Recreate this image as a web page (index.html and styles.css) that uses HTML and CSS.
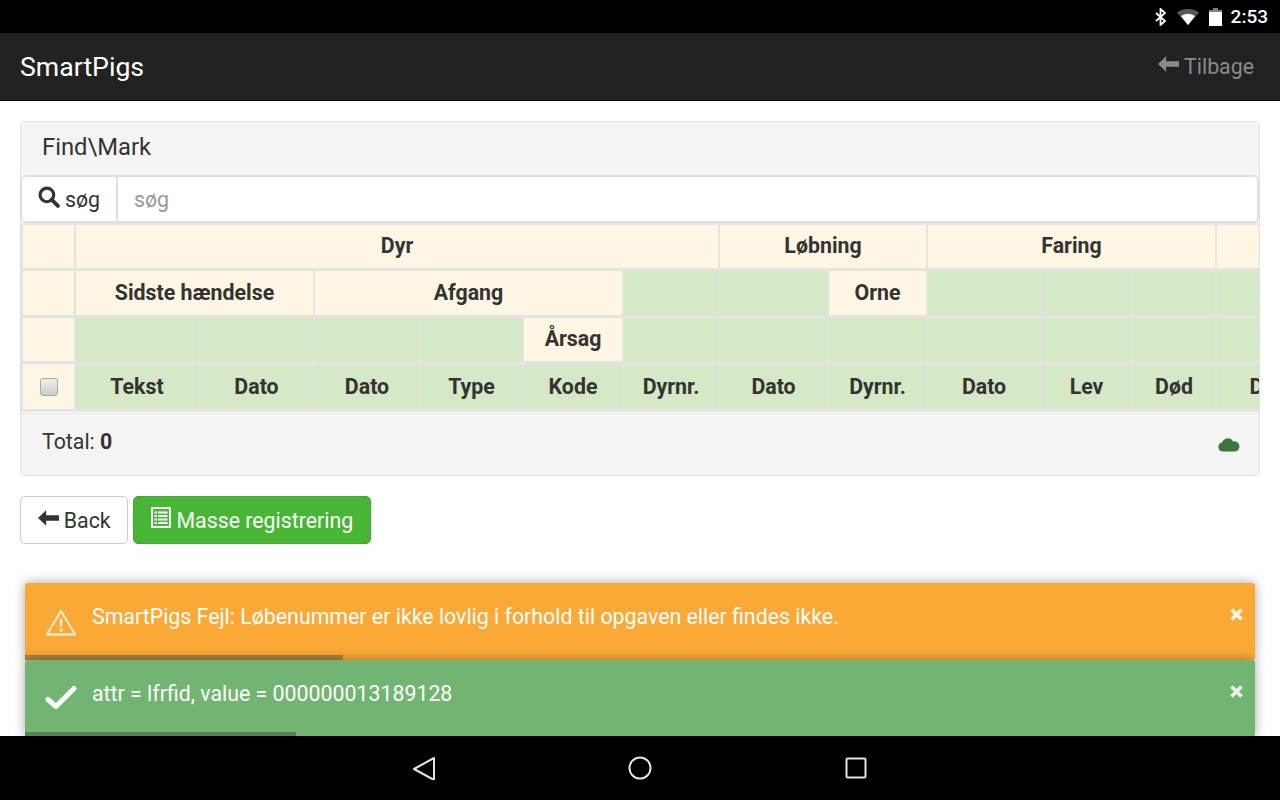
FILE: index.html
```html
<!DOCTYPE html>
<html lang="da">

<head>
  <meta charset="UTF-8" />
  <meta name="viewport" content="width=device-width, initial-scale=1.0" />
  <title>SmartPigs</title>
  <link rel="stylesheet" href="styles.css">
</head>

<body>
  <div class="status-bar">
    <svg class="ic-bt" viewBox="0 0 12 18"><path d="M1 5l9 8-4.500 4V1L10 5l-9 8" fill="none" stroke="#fff" stroke-width="1.800"/></svg>
    <svg class="ic-wifi" viewBox="0 0 22 16"><path d="M0 3.500C6-1.200 16-1.200 22 3.500L11 16z" fill="#fff" opacity=".35"/><path d="M4 7.200C8 3.800 14 3.800 18 7.200L11 16z" fill="#fff"/></svg>
    <svg class="ic-batt" viewBox="0 0 13 18"><path d="M4 0h5v2h4v3H0V2h4z" fill="#fff" opacity=".5"/><path d="M0 4h13v14H0z" fill="#fff"/></svg>
    <span class="clock">2:53</span>
  </div>

  <nav class="navbar">
    <span class="brand">SmartPigs</span>
    <a class="nav-back">
      <svg class="ic-arrow" viewBox="0 0 22 16"><path d="M0 8l8.500-8v5H22v6H8.500v5z" fill="currentColor"/></svg>
      Tilbage
    </a>
  </nav>

  <main class="content">
    <div class="panel">
      <div class="panel-heading">Find\Mark</div>

      <div class="search-row">
        <span class="search-addon">
          <svg class="ic-search" viewBox="0 0 21 21"><circle cx="8.500" cy="8.500" r="6.500" fill="none" stroke="currentColor" stroke-width="3"/><path d="M13 13l6 6" stroke="currentColor" stroke-width="3.600" stroke-linecap="round"/></svg>
          søg
        </span>
        <input class="search-input" type="text" placeholder="søg" />
      </div>

      <div class="table-wrap">
        <table class="grid">
          <colgroup>
            <col class="c-check"><col class="c-tekst"><col class="c-dato1"><col class="c-dato2"><col class="c-type"><col class="c-kode"><col class="c-dyr1"><col class="c-dato3"><col class="c-dyr2"><col class="c-dato4"><col class="c-lev"><col class="c-dod"><col class="c-last">
          </colgroup>
          <thead>
            <tr class="row-1">
              <th></th>
              <th colspan="6">Dyr</th>
              <th colspan="2">Løbning</th>
              <th colspan="3">Faring</th>
              <th></th>
            </tr>
            <tr class="row-2">
              <th></th>
              <th colspan="2">Sidste hændelse</th>
              <th colspan="3">Afgang</th>
              <th class="ok"></th>
              <th class="ok"></th>
              <th>Orne</th>
              <th class="ok"></th>
              <th class="ok"></th>
              <th class="ok"></th>
              <th class="ok"></th>
            </tr>
            <tr class="row-3">
              <th></th>
              <th class="ok"></th>
              <th class="ok"></th>
              <th class="ok"></th>
              <th class="ok"></th>
              <th>Årsag</th>
              <th class="ok"></th>
              <th class="ok"></th>
              <th class="ok"></th>
              <th class="ok"></th>
              <th class="ok"></th>
              <th class="ok"></th>
              <th class="ok"></th>
            </tr>
            <tr class="row-4">
              <th><input class="check" type="checkbox" /></th>
              <th class="ok">Tekst</th>
              <th class="ok">Dato</th>
              <th class="ok">Dato</th>
              <th class="ok">Type</th>
              <th class="ok">Kode</th>
              <th class="ok">Dyrnr.</th>
              <th class="ok">Dato</th>
              <th class="ok">Dyrnr.</th>
              <th class="ok">Dato</th>
              <th class="ok">Lev</th>
              <th class="ok">Død</th>
              <th class="ok">Dato</th>
            </tr>
          </thead>
        </table>
      </div>

      <div class="panel-footer">
        <span>Total: <b>0</b></span>
        <svg class="ic-cloud" viewBox="0 0 22 14"><path d="M5 14a4.500 4.500 0 0 1-1-8.900A6 6 0 0 1 15 4a5 5 0 0 1 2.500 10z" fill="currentColor"/></svg>
      </div>
    </div>

    <div class="actions">
      <button class="btn">
        <svg class="ic-arrow" viewBox="0 0 22 16"><path d="M0 8l8.500-8v5H22v6H8.500v5z" fill="currentColor"/></svg>
        Back
      </button>
      <button class="btn btn-green">
        <svg class="ic-list" viewBox="0 0 20 21"><path fill-rule="evenodd" d="M0 0h20v21H0zM2 2v17h16V2zM3.500 4.500h2.500v2H3.500zM7 4.500h9.500v2H7zM3.500 8h2.500v2H3.500zM7 8h9.500v2H7zM3.500 11.500h2.500v2H3.500zM7 11.500h9.500v2H7zM3.500 15h2.500v2H3.500zM7 15h9.500v2H7z" fill="currentColor"/></svg>
        Masse registrering
      </button>
    </div>

    <div class="toasts">
      <div class="toast toast-warning">
        <svg class="toast-icon" viewBox="0 0 32 28"><path d="M16 2L1.500 26.500h29z" fill="none" stroke="currentColor" stroke-width="2" stroke-linejoin="round"/><path d="M14.500 10h3l-.5 9h-2zM14.500 20.500h3v3h-3z" fill="currentColor"/></svg>
        <span class="toast-text">SmartPigs Fejl: Løbenummer er ikke lovlig i forhold til opgaven eller findes ikke.</span>
        <svg class="toast-close" viewBox="0 0 15 15"><path d="M2.500 2.500l10 10M12.500 2.500l-10 10" stroke="currentColor" stroke-width="3.800"/></svg>
        <div class="toast-progress progress-warning"></div>
      </div>
      <div class="toast toast-success">
        <svg class="toast-icon toast-check" viewBox="0 0 32 24"><path d="M3 14l8 7L29 3" fill="none" stroke="currentColor" stroke-width="5" stroke-linecap="round" stroke-linejoin="round"/></svg>
        <span class="toast-text">attr = lfrfid, value = 000000013189128</span>
        <svg class="toast-close" viewBox="0 0 15 15"><path d="M2.500 2.500l10 10M12.500 2.500l-10 10" stroke="currentColor" stroke-width="3.800"/></svg>
        <div class="toast-progress progress-success"></div>
      </div>
    </div>
  </main>

  <div class="android-nav">
    <svg class="nav-ic" viewBox="0 0 24 24"><path d="M22 2v22L2 13z" fill="none" stroke="#e4e4e4" stroke-width="2" stroke-linejoin="round"/></svg>
    <svg class="nav-ic" viewBox="0 0 24 24"><circle cx="12" cy="12" r="10.500" fill="none" stroke="#e4e4e4" stroke-width="2"/></svg>
    <svg class="nav-ic" viewBox="0 0 24 24"><rect x="2.500" y="2.500" width="19" height="19" rx="1" fill="none" stroke="#e4e4e4" stroke-width="2"/></svg>
  </div>
</body>

</html>
```

FILE: styles.css
```css
* {
  box-sizing: border-box;
}

html,
body {
  margin: 0;
  height: 800px;
  overflow: hidden;
}

body {
  display: flex;
  flex-direction: column;
  font-family: Roboto, "Liberation Sans", sans-serif;
  font-size: 21.33px;
  color: #333;
  background: #fff;
}

.status-bar {
  height: 33px;
  flex: none;
  background: #000;
  color: #fff;
  display: flex;
  align-items: center;
  justify-content: flex-end;
  padding-right: 12px;
}

.ic-bt {
  width: 12px;
  height: 18px;
  margin-right: 10px;
}

.ic-wifi {
  width: 22px;
  height: 16px;
  margin-right: 10px;
}

.ic-batt {
  width: 13px;
  height: 18px;
  margin-right: 9px;
}

.clock {
  font-size: 19px;
  font-weight: 500;
}

.navbar {
  height: 68px;
  flex: none;
  background: #222;
  border-bottom: 1px solid #111;
  display: flex;
  align-items: center;
  justify-content: space-between;
  padding: 0 26px 0 20px;
}

.brand {
  font-size: 26.67px;
  color: #fff;
}

.nav-back {
  color: #8a8a8a;
}

.ic-arrow {
  width: 21px;
  height: 16px;
  vertical-align: 2px;
}

.content {
  position: relative;
  flex: 1;
  padding: 20px;
  overflow: hidden;
}

.panel {
  border: 1px solid #e0e0e0;
  border-radius: 5px;
  overflow: hidden;
}

.panel-heading {
  height: 53px;
  padding: 10px 21px;
  background: #f4f4f4;
  font-size: 23.8px;
  line-height: 30px;
}

.search-row {
  display: flex;
  height: 48px;
  background: #fff;
  border: 2px solid #e0e0e0;
  border-left-width: 1px;
  border-radius: 5px;
}

.search-addon {
  width: 96px;
  flex: none;
  display: flex;
  align-items: center;
  justify-content: center;
  gap: 5px;
  border-right: 2px solid #e0e0e0;
}

.ic-search {
  width: 22px;
  height: 22px;
  margin-top: -4px;
}

.search-input {
  flex: 1;
  min-width: 0;
  border: 0;
  outline: 0;
  padding: 0 16px;
  background: transparent;
  font: inherit;
}

.search-input::placeholder {
  color: #999;
}

.table-wrap {
  overflow: hidden;
  margin-bottom: 1px;
}

.grid {
  table-layout: fixed;
  width: 1305px;
  border-collapse: collapse;
  margin-top: -1px;
}

.c-check { width: 53px; }
.c-tekst { width: 124px; }
.c-dato1 { width: 115px; }
.c-dato2 { width: 106px; }
.c-type { width: 103px; }
.c-kode { width: 100px; }
.c-dyr1 { width: 96px; }
.c-dato3 { width: 109px; }
.c-dyr2 { width: 99px; }
.c-dato4 { width: 114px; }
.c-lev { width: 91px; }
.c-dod { width: 84px; }
.c-last { width: 111px; }

.grid th {
  padding: 0;
  overflow: hidden;
  white-space: nowrap;
  background: #fdf6e3;
  border: 2px solid #e4e4e4;
  border-top-width: 3px;
  border-bottom-width: 3px;
  font-size: 21.33px;
  font-weight: 700;
  text-align: center;
}

.grid th.ok {
  background: #d6e9c6;
  border-left-color: #e0e4da;
  border-right-color: #e0e4da;
}

.row-1 th {
  height: 46px;
  padding-bottom: 3px;
}

.row-2 th {
  height: 47px;
  padding-bottom: 2px;
}

.row-3 th {
  height: 46px;
  padding-bottom: 2px;
}

.row-4 th {
  height: 48px;
}

.check {
  appearance: none;
  display: block;
  width: 18px;
  height: 18px;
  margin: 0 auto;
  border: 1px solid #aaa;
  border-radius: 3px;
  background: linear-gradient(#eee, #ccc);
}

.panel-footer {
  height: 62px;
  padding: 0 19px 7px 21px;
  background: #f4f4f4;
  border-top: 1px solid #e4e4e4;
  display: flex;
  align-items: center;
  justify-content: space-between;
}

.ic-cloud {
  width: 22px;
  height: 15px;
  color: #3c763d;
  margin-top: 6px;
}

.actions {
  display: flex;
  gap: 5px;
  margin-top: 20px;
}

.btn {
  height: 48px;
  padding: 0 16.5px;
  border: 1px solid #ccc;
  border-radius: 5px;
  background: #fff;
  color: #333;
  font: inherit;
}

.btn-green {
  padding: 0 17px;
  background: #47b635;
  border-color: #42a832;
  color: #fff;
}

.ic-list {
  width: 20px;
  height: 21px;
  vertical-align: 0;
}

.toasts {
  position: absolute;
  left: 25px;
  right: 25px;
  top: 482px;
}

.toast {
  position: relative;
  height: 77px;
  color: #fff;
  border-radius: 3px;
  box-shadow: 0 0 12px rgba(0, 0, 0, .35);
}

.toast-warning {
  background: #faa937;
}

.toast-success {
  background: #72b572;
}

.toast-icon {
  position: absolute;
  left: 20px;
  top: 26px;
  width: 32px;
  height: 27px;
  opacity: .8;
}

.toast-check {
  opacity: 1;
  top: 25px;
  height: 25px;
}

.toast-text {
  position: absolute;
  left: 67px;
  top: 22px;
  line-height: 24px;
  white-space: nowrap;
}

.toast-close {
  position: absolute;
  right: 11px;
  top: 24px;
  width: 15px;
  height: 15px;
  color: #fff;
  opacity: .85;
}

.toast-progress {
  position: absolute;
  left: 0;
  bottom: 0;
  height: 5px;
}

.progress-warning {
  width: 318px;
  background: #ae8344;
}

.progress-success {
  width: 271px;
  background: #5a7f5a;
}

.android-nav {
  height: 64px;
  flex: none;
  position: relative;
  z-index: 2;
  background: #000;
  display: flex;
  align-items: center;
  justify-content: center;
  gap: 192px;
}

.nav-ic {
  width: 24px;
  height: 24px;
}
```
